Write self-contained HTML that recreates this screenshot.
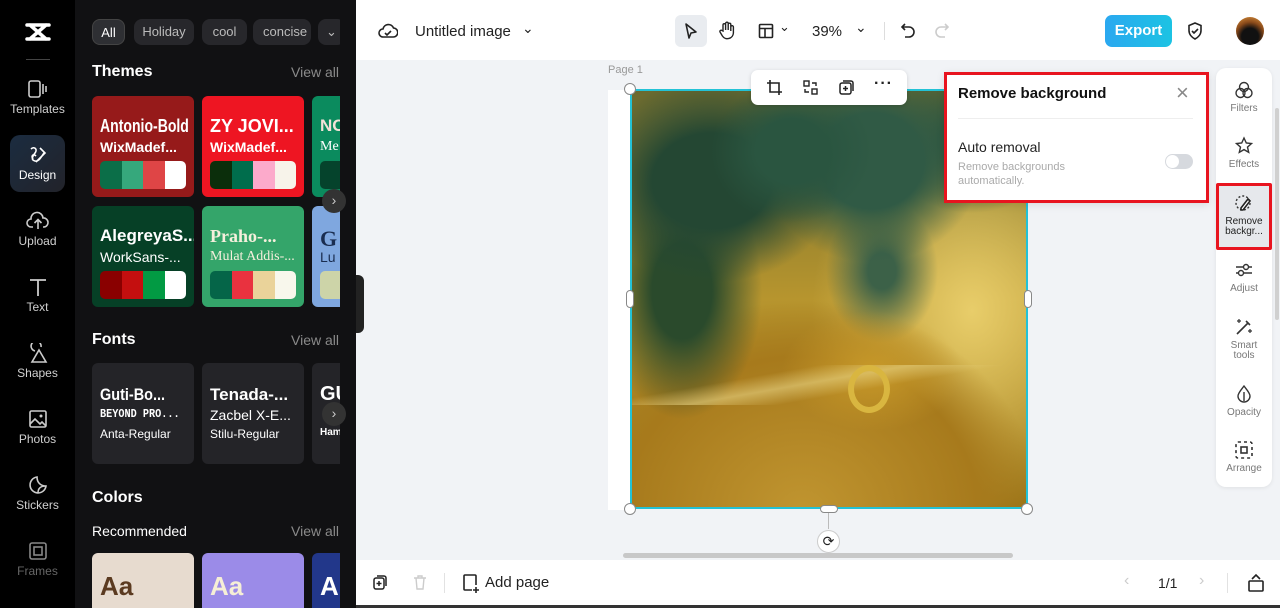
<!DOCTYPE html>
<html><head><meta charset="utf-8">
<style>
*{box-sizing:border-box;margin:0;padding:0}
body{width:1280px;height:608px;overflow:hidden;font-family:"Liberation Sans",sans-serif;background:#f1f3f6;position:relative}
.abs{position:absolute}
.rail{left:0;top:0;width:75px;height:608px;background:#000;overflow:hidden}
.panel{left:75px;top:0;width:281px;height:608px;background:#111113;overflow:hidden}
.clip{position:absolute;left:0;top:0;width:265px;height:608px;overflow:hidden}
.ri{position:absolute;left:0;width:75px;text-align:center;color:#d0d0d0;font-size:12px}
.ri svg{display:block;margin:0 auto 3px}
.chip{position:absolute;top:19px;height:26px;border-radius:8px;background:#27272b;color:#bbb;font-size:13px;line-height:26px;text-align:center}
.h{position:absolute;color:#fff;font-weight:bold;font-size:16px}
.va{position:absolute;left:216px;color:#8a8a8a;font-size:14px}
.card{position:absolute;width:102px;height:101px;border-radius:6px;overflow:hidden}
.card .t1{position:absolute;left:8px;top:20px;font-weight:bold;font-size:17px;color:#fff;white-space:nowrap}
.card .t2{position:absolute;left:8px;top:43px;font-size:14px;color:#fff;white-space:nowrap;font-weight:bold}
.sw{position:absolute;left:8px;top:65px;width:86px;height:28px;border-radius:5px;overflow:hidden;display:flex}
.sw i{flex:1}
.top{left:356px;top:0;width:924px;height:60px;background:#fff}
.bot{left:356px;top:560px;width:924px;height:45px;background:#fff}
.rt{left:1216px;top:68px;width:56px;height:419px;background:#fff;border-radius:10px;box-shadow:0 1px 4px rgba(0,0,0,.08)}
.rb{position:absolute;left:0;width:56px;text-align:center;font-size:10px;color:#777;line-height:10px}
.rb svg{display:block;margin:0 auto 4px}
.nx{position:absolute;width:24px;height:24px;border-radius:50%;background:#333;color:#ccc;text-align:center;line-height:22px;font-size:14px}
</style></head><body>
<div class="abs rail">
  <svg class="abs" style="left:24px;top:21px" width="28" height="22" viewBox="0 0 28 22"><path d="M3 4h22M3 18h22M6 4l16 14M22 4L6 18" stroke="#fff" stroke-width="3.5" fill="none" stroke-linecap="round"/></svg>
  <div class="abs" style="left:26px;top:59px;width:24px;height:1px;background:#444"></div>
  <div class="ri" style="top:79px"><svg width="22" height="20" viewBox="0 0 22 20"><rect x="2" y="2" width="11" height="16" rx="2" stroke="#ccc" stroke-width="1.6" fill="none"/><path d="M16 5v10M19 7v6" stroke="#ccc" stroke-width="1.6"/></svg>Templates</div>
  <div class="abs" style="left:10px;top:135px;width:55px;height:57px;border-radius:10px;background:linear-gradient(135deg,#1b2c40,#22232a)"></div>
  <div class="ri" style="top:145px;color:#fff"><svg width="22" height="20" viewBox="0 0 22 20"><path d="M4 4c3-3 7 0 4 4s-4 7 0 8 6-4 9-8M6 14c-2-3 0-6 3-3M13 3l5 5-9 9" stroke="#fff" stroke-width="1.6" fill="none"/></svg>Design</div>
  <div class="ri" style="top:211px"><svg width="24" height="20" viewBox="0 0 24 20"><path d="M7 16H5a4 4 0 0 1 0-8 6 6 0 0 1 12-1 4.5 4.5 0 0 1 1 9h-1M12 18v-9M8.5 12L12 8.5 15.5 12" stroke="#ccc" stroke-width="1.6" fill="none"/></svg>Upload</div>
  <div class="ri" style="top:277px"><svg width="22" height="20" viewBox="0 0 22 20"><path d="M3 3h16M11 3v16" stroke="#ccc" stroke-width="1.8"/></svg>Text</div>
  <div class="ri" style="top:343px"><svg width="22" height="20" viewBox="0 0 22 20"><path d="M8 8a5 5 0 1 1 6-4M12 7l7 12H5z" stroke="#ccc" stroke-width="1.6" fill="none"/></svg>Shapes</div>
  <div class="ri" style="top:409px"><svg width="22" height="20" viewBox="0 0 22 20"><rect x="3" y="2" width="16" height="16" rx="1.5" stroke="#ccc" stroke-width="1.6" fill="none"/><path d="M3 15l5-5 5 5 2-2 4 4" stroke="#ccc" stroke-width="1.6" fill="none"/><circle cx="14" cy="7" r="1.5" fill="#ccc"/></svg>Photos</div>
  <div class="ri" style="top:475px"><svg width="22" height="20" viewBox="0 0 22 20"><path d="M19 11A8 8 0 1 1 10 2c0 5 3 9 9 9zM19 11c-4 0-8 1-8 7" stroke="#ccc" stroke-width="1.6" fill="none"/></svg>Stickers</div>
  <div class="ri" style="top:541px;color:#666"><svg width="22" height="20" viewBox="0 0 22 20"><rect x="3" y="2" width="16" height="16" rx="2" stroke="#888" stroke-width="1.6" fill="none"/><rect x="7" y="6" width="8" height="8" stroke="#888" stroke-width="1.6" fill="none"/></svg>Frames</div>
</div>
<div class="abs panel">
 <div class="clip">
  <div class="chip" style="left:17px;width:33px;background:#2e2f33;color:#fff;border:1px solid #444">All</div>
  <div class="chip" style="left:59px;width:60px">Holiday</div>
  <div class="chip" style="left:127px;width:45px">cool</div>
  <div class="chip" style="left:178px;width:58px;text-align:left;padding-left:10px;overflow:hidden">concise</div>
  <div class="chip" style="left:243px;width:27px">⌄</div>
  <div class="h" style="left:17px;top:63px">Themes</div><div class="va" style="top:64px">View all</div>
  <div class="card" style="left:17px;top:96px;background:#961a1a"><div class="t1" style="font-size:18px;transform:scaleX(.78);transform-origin:left">Antonio-Bold</div><div class="t2">WixMadef...</div><div class="sw"><i style="background:#0b6e48"></i><i style="background:#36a87c"></i><i style="background:#df4546"></i><i style="background:#fff"></i></div></div>
  <div class="card" style="left:127px;top:96px;background:#ee1522"><div class="t1" style="font-size:18px">ZY JOVI...</div><div class="t2">WixMadef...</div><div class="sw"><i style="background:#0b2e0b"></i><i style="background:#006d4c"></i><i style="background:#fcaacb"></i><i style="background:#f7f3ea"></i></div></div>
  <div class="card" style="left:237px;top:96px;background:#0b8b5e"><div class="t1" style="color:#f3e2d8">NC</div><div class="t2" style="font-weight:normal;font-family:'Liberation Serif',serif">Me</div><div class="sw"><i style="background:#05432c"></i></div></div>
  <div class="card" style="left:17px;top:206px;background:#064026"><div class="t1">AlegreyaS...</div><div class="t2" style="font-weight:normal">WorkSans-...</div><div class="sw"><i style="background:#8a0000"></i><i style="background:#c40f0f"></i><i style="background:#029a43"></i><i style="background:#fff"></i></div></div>
  <div class="card" style="left:127px;top:206px;background:#34a56a"><div class="t1" style="font-family:'Liberation Serif',serif;color:#f5efdc;font-size:18px">Praho-...</div><div class="t2" style="font-family:'Liberation Serif',serif;font-weight:normal;color:#f5efdc">Mulat Addis-...</div><div class="sw"><i style="background:#056548"></i><i style="background:#e9323f"></i><i style="background:#ead39a"></i><i style="background:#f8f7ec"></i></div></div>
  <div class="card" style="left:237px;top:206px;background:#7fa7df"><div class="t1" style="color:#1a2d50;font-family:'Liberation Serif',serif;font-size:22px">G</div><div class="t2" style="color:#1a2d50;font-weight:normal">Lu</div><div class="sw"><i style="background:#cdd4a8"></i></div></div>
  <div class="h" style="left:17px;top:331px">Fonts</div><div class="va" style="top:332px">View all</div>
  <div class="card" style="left:17px;top:363px;background:#242428"><div class="t1" style="top:22px;font-size:17px;transform:scaleX(.85);transform-origin:left">Guti-Bo...</div><div class="t2" style="top:44px;font-family:'Liberation Mono',monospace;font-size:12px;transform:scaleX(.85);transform-origin:left">BEYOND PRO...</div><div class="t2" style="top:64px;font-size:12px;font-weight:normal">Anta-Regular</div></div>
  <div class="card" style="left:127px;top:363px;background:#242428"><div class="t1" style="top:22px">Tenada-...</div><div class="t2" style="top:44px;font-weight:normal">Zacbel X-E...</div><div class="t2" style="top:64px;font-size:12px;font-weight:normal">Stilu-Regular</div></div>
  <div class="card" style="left:237px;top:363px;background:#242428"><div class="t1" style="top:20px;font-size:20px">GU</div><div class="t2" style="top:64px;font-size:10px">Ham</div></div>
  <div class="h" style="left:17px;top:489px">Colors</div>
  <div class="abs" style="left:17px;top:523px;color:#fff;font-size:14px">Recommended</div><div class="va" style="top:523px">View all</div>
  <div class="card" style="left:17px;top:553px;background:#e7dbcf"><div class="t1" style="top:18px;font-size:26px;color:#5b3a20">Aa</div></div>
  <div class="card" style="left:127px;top:553px;background:#9b8be8"><div class="t1" style="top:18px;font-size:26px;color:#f6efd6">Aa</div></div>
  <div class="card" style="left:237px;top:553px;background:#22378a"><div class="t1" style="top:18px;font-size:26px">A</div></div>
 </div>
 <div class="nx" style="left:247px;top:189px">›</div>
 <div class="nx" style="left:247px;top:402px">›</div>
</div>
<div class="abs" style="left:356px;top:275px;width:8px;height:58px;background:#222;border-radius:0 6px 6px 0"></div>

<div class="abs top">
  <svg class="abs" style="left:22px;top:22px" width="20" height="18" viewBox="0 0 20 18"><path d="M6 15H5a4 4 0 0 1 0-8 5.5 5.5 0 0 1 10.5-1A4.5 4.5 0 0 1 15 15H6zM7 11l2 2 4-4" stroke="#222" stroke-width="1.6" fill="none"/></svg>
  <div class="abs" style="left:59px;top:23px;font-size:15px;color:#222">Untitled image</div>
  <div class="abs" style="left:166px;top:20px;font-size:14px;color:#222">⌄</div>
  <div class="abs" style="left:319px;top:15px;width:32px;height:32px;border-radius:6px;background:#e9ecf0"></div>
  <svg class="abs" style="left:327px;top:22px" width="16" height="18" viewBox="0 0 16 18"><path d="M3 2l10 8-5 1-2 5z" stroke="#222" stroke-width="1.6" fill="none" stroke-linejoin="round"/></svg>
  <svg class="abs" style="left:362px;top:21px" width="18" height="20" viewBox="0 0 18 20"><path d="M5 10V4a1.3 1.3 0 0 1 2.6 0v5V2.5a1.3 1.3 0 0 1 2.6 0V9V3.5a1.3 1.3 0 0 1 2.6 0V10V6a1.3 1.3 0 0 1 2.6 0v6a6 6 0 0 1-11 3L2 11a1.3 1.3 0 0 1 2-1.5z" stroke="#222" stroke-width="1.4" fill="none"/></svg>
  <svg class="abs" style="left:402px;top:23px" width="16" height="16" viewBox="0 0 16 16"><rect x="1.5" y="1.5" width="13" height="13" rx="1" stroke="#222" stroke-width="1.6" fill="none"/><path d="M1.5 5.5h13M7 5.5v9" stroke="#222" stroke-width="1.6"/></svg>
  <div class="abs" style="left:423px;top:19px;font-size:13px;color:#222">⌄</div>
  <div class="abs" style="left:456px;top:23px;font-size:15px;color:#222">39%</div>
  <div class="abs" style="left:499px;top:19px;font-size:14px;color:#222">⌄</div>
  <div class="abs" style="left:528px;top:22px;width:1px;height:18px;background:#ddd"></div>
  <svg class="abs" style="left:544px;top:22px" width="16" height="18" viewBox="0 0 16 18"><path d="M5 2L2 5l3 3M2 5h7a5 5 0 0 1 0 10H5" stroke="#222" stroke-width="1.6" fill="none"/></svg>
  <svg class="abs" style="left:578px;top:22px" width="16" height="18" viewBox="0 0 16 18"><path d="M11 2l3 3-3 3M14 5H7a5 5 0 0 0 0 10h4" stroke="#ccc" stroke-width="1.6" fill="none"/></svg>
  <div class="abs" style="left:749px;top:15px;width:67px;height:32px;border-radius:7px;background:linear-gradient(90deg,#2ba8f0,#1cc3e3);color:#fff;font-weight:bold;font-size:15px;line-height:32px;text-align:center">Export</div>
  <svg class="abs" style="left:830px;top:21px" width="18" height="20" viewBox="0 0 18 20"><path d="M9 2l6 2.5v5c0 4-3 7-6 8.5-3-1.5-6-4.5-6-8.5v-5z M6 10l2 2 4-4" stroke="#222" stroke-width="1.6" fill="none"/></svg>
  <div class="abs" style="left:880px;top:17px;width:28px;height:28px;border-radius:50%;background:radial-gradient(circle at 50% 70%,#111 35%,#8a4a1a 60%,#d08a3a 90%)"></div>
</div>

<div class="abs" style="left:608px;top:64px;font-size:11px;color:#999">Page 1</div>
<div class="abs" style="left:608px;top:90px;width:22px;height:420px;background:#fff"></div>
<div class="abs" style="left:630px;top:89px;width:398px;height:420px;border:2px solid #23c2d6;overflow:hidden;background:
radial-gradient(ellipse 90px 60px at 240px 280px,#c89a2a,transparent),
radial-gradient(ellipse 90px 80px at 160px 60px,#2a5540 40%,transparent 90%),
radial-gradient(ellipse 150px 120px at 80px 90px,#244733 40%,transparent 85%),
radial-gradient(ellipse 130px 120px at 240px 70px,#305a45 40%,transparent 85%),
radial-gradient(ellipse 110px 90px at 340px 50px,#33573d 30%,transparent 80%),
radial-gradient(ellipse 100px 160px at 50px 200px,#2a4a2c 30%,transparent 80%),
radial-gradient(ellipse 70px 90px at 250px 180px,#3c6148 20%,transparent 80%),
radial-gradient(ellipse 320px 280px at 170px 420px,#c09530 0%,#a77a1c 55%,transparent 75%),
radial-gradient(ellipse 160px 200px at 340px 220px,#e8cd6a,transparent),
linear-gradient(180deg,#6a6a30,#b7952e 50%,#9a7418)"></div>
<div class="abs" style="left:632px;top:365px;width:396px;height:40px;background:linear-gradient(170deg,transparent 30%,rgba(230,210,130,.6) 45%,transparent 60%)"></div>
<div class="abs" style="left:848px;top:365px;width:42px;height:48px;border:6px solid #d9b640;border-radius:50%"></div>
<div class="abs" style="left:624px;top:83px;width:12px;height:12px;border-radius:50%;background:#fff;border:1px solid #888"></div>
<div class="abs" style="left:624px;top:503px;width:12px;height:12px;border-radius:50%;background:#fff;border:1px solid #888"></div>
<div class="abs" style="left:1021px;top:503px;width:12px;height:12px;border-radius:50%;background:#fff;border:1px solid #888"></div>
<div class="abs" style="left:626px;top:290px;width:8px;height:18px;border-radius:4px;background:#fff;border:1px solid #888"></div>
<div class="abs" style="left:1024px;top:290px;width:8px;height:18px;border-radius:4px;background:#fff;border:1px solid #888"></div>
<div class="abs" style="left:820px;top:505px;width:18px;height:8px;border-radius:4px;background:#fff;border:1px solid #888"></div>
<div class="abs" style="left:828px;top:513px;width:1px;height:16px;background:#bbb"></div>
<div class="abs" style="left:817px;top:530px;width:23px;height:23px;border-radius:50%;background:#fff;border:1px solid #ccc;text-align:center;line-height:21px;font-size:14px;color:#222">⟳</div>
<div class="abs" style="left:623px;top:553px;width:390px;height:5px;border-radius:3px;background:#c8c8c8"></div>

<div class="abs" style="left:751px;top:70px;width:156px;height:35px;background:#fff;border-radius:7px;box-shadow:0 1px 4px rgba(0,0,0,.15)">
  <svg class="abs" style="left:15px;top:9px" width="17" height="17" viewBox="0 0 17 17"><path d="M4 1v12h12M1 4h12v12" stroke="#222" stroke-width="1.6" fill="none"/></svg>
  <svg class="abs" style="left:51px;top:9px" width="17" height="17" viewBox="0 0 17 17"><rect x="2" y="2" width="5" height="5" stroke="#222" stroke-width="1.4" fill="none"/><rect x="10" y="10" width="5" height="5" stroke="#222" stroke-width="1.4" fill="none"/><path d="M10 4h4v3M7 13H3v-3" stroke="#222" stroke-width="1.4" fill="none"/></svg>
  <svg class="abs" style="left:87px;top:9px" width="17" height="17" viewBox="0 0 17 17"><rect x="2" y="4" width="11" height="11" rx="2" stroke="#222" stroke-width="1.5" fill="none"/><path d="M5 2h8a2 2 0 0 1 2 2v8M7.5 7v5M5 9.5h5" stroke="#222" stroke-width="1.5" fill="none"/></svg>
  <div class="abs" style="left:123px;top:5px;font-size:16px;font-weight:bold;color:#222;letter-spacing:1px">···</div>
</div>

<div class="abs" style="left:944px;top:72px;width:265px;height:131px;background:#fff;border:3px solid #e8141f;box-shadow:0 2px 8px rgba(0,0,0,.1)">
  <div class="abs" style="left:11px;top:10px;font-size:15px;font-weight:bold;color:#111">Remove background</div>
  <div class="abs" style="left:229px;top:5px;font-size:22px;color:#888;font-weight:300">×</div>
  <div class="abs" style="left:11px;top:43px;width:235px;height:1px;background:#eee"></div>
  <div class="abs" style="left:11px;top:64px;font-size:14px;color:#222">Auto removal</div>
  <div class="abs" style="left:11px;top:85px;font-size:11px;color:#aaa;line-height:14px">Remove backgrounds<br>automatically.</div>
  <div class="abs" style="left:218px;top:79px;width:28px;height:15px;border-radius:8px;background:#d6d9de"><div class="abs" style="left:1px;top:1px;width:13px;height:13px;border-radius:50%;background:#fff"></div></div>
</div>

<div class="abs rt">
  <div class="rb" style="top:12px"><svg width="20" height="20" viewBox="0 0 20 20"><circle cx="10" cy="7" r="4.5" stroke="#333" stroke-width="1.4" fill="none"/><circle cx="6.5" cy="13" r="4.5" stroke="#333" stroke-width="1.4" fill="none"/><circle cx="13.5" cy="13" r="4.5" stroke="#333" stroke-width="1.4" fill="none"/></svg>Filters</div>
  <div class="rb" style="top:68px"><svg width="20" height="20" viewBox="0 0 20 20"><path d="M10 2l2.3 5 5.2.5-4 3.6 1.2 5.2L10 13.6 5.3 16.3l1.2-5.2-4-3.6 5.2-.5z" stroke="#333" stroke-width="1.4" fill="none"/></svg>Effects</div>
  <div class="abs" style="left:0;top:115px;width:56px;height:67px;border:3px solid #e8141f;background:#e6e8ec;border-radius:2px"></div>
  <div class="rb" style="top:125px;color:#222"><svg width="20" height="20" viewBox="0 0 20 20"><circle cx="9" cy="10" r="7" stroke="#333" stroke-width="1.4" stroke-dasharray="2 2" fill="none"/><path d="M7 15l7-9 2 2-7 9H7z" stroke="#222" stroke-width="1.6" fill="#fff"/></svg>Remove<br>backgr...</div>
  <div class="rb" style="top:192px"><svg width="20" height="20" viewBox="0 0 20 20"><path d="M2 7h16M2 13h16" stroke="#333" stroke-width="1.4"/><circle cx="12" cy="7" r="2.5" fill="#fff" stroke="#333" stroke-width="1.4"/><circle cx="7" cy="13" r="2.5" fill="#fff" stroke="#333" stroke-width="1.4"/></svg>Adjust</div>
  <div class="rb" style="top:249px"><svg width="20" height="20" viewBox="0 0 20 20"><path d="M3 17L14 6M12 4l4 4" stroke="#333" stroke-width="1.6"/><path d="M5 2v4M3 4h4M16 12v4M14 14h4" stroke="#333" stroke-width="1.2"/></svg>Smart<br>tools</div>
  <div class="rb" style="top:316px"><svg width="20" height="20" viewBox="0 0 20 20"><path d="M10 2c3 4 6 7 6 10a6 6 0 0 1-12 0c0-3 3-6 6-10z" stroke="#333" stroke-width="1.4" fill="none"/><path d="M10 8v9" stroke="#333" stroke-width="1.4"/></svg>Opacity</div>
  <div class="rb" style="top:372px"><svg width="20" height="20" viewBox="0 0 20 20"><rect x="2" y="2" width="16" height="16" rx="2" stroke="#333" stroke-width="1.6" stroke-dasharray="3 3" fill="none"/><rect x="7" y="7" width="6" height="6" stroke="#333" stroke-width="1.6" fill="none"/></svg>Arrange</div>
</div>
<div class="abs" style="left:1275px;top:108px;width:4px;height:212px;background:#d0d0d0;border-radius:2px"></div>

<div class="abs bot">
  <svg class="abs" style="left:16px;top:14px" width="16" height="17" viewBox="0 0 16 17"><rect x="2" y="4" width="10" height="11" rx="2" stroke="#222" stroke-width="1.5" fill="none"/><path d="M5 2h7a2 2 0 0 1 2 2v8M7 7v5M4.5 9.5h5" stroke="#222" stroke-width="1.5" fill="none"/></svg>
  <svg class="abs" style="left:56px;top:14px" width="16" height="17" viewBox="0 0 16 17"><path d="M2 4h12M6 4V2h4v2M4 4l1 11h6l1-11" stroke="#ccc" stroke-width="1.4" fill="none"/></svg>
  <div class="abs" style="left:88px;top:13px;width:1px;height:20px;background:#e2e2e2"></div>
  <svg class="abs" style="left:106px;top:13px" width="18" height="20" viewBox="0 0 18 20"><path d="M10 17H3a1 1 0 0 1-1-1V3a1 1 0 0 1 1-1h10a1 1 0 0 1 1 1v9M14 14v6M11 17h6" stroke="#222" stroke-width="1.6" fill="none"/></svg>
  <div class="abs" style="left:129px;top:14px;font-size:15px;color:#222">Add page</div>
  <div class="abs" style="left:768px;top:12px;font-size:16px;color:#ccc">‹</div>
  <div class="abs" style="left:802px;top:15px;font-size:14px;color:#222">1/1</div>
  <div class="abs" style="left:843px;top:12px;font-size:16px;color:#ccc">›</div>
  <div class="abs" style="left:871px;top:13px;width:1px;height:20px;background:#e2e2e2"></div>
  <svg class="abs" style="left:891px;top:13px" width="18" height="20" viewBox="0 0 18 20"><rect x="2" y="8" width="14" height="10" rx="1" stroke="#222" stroke-width="1.6" fill="none"/><path d="M5 6l4-4 4 4" stroke="#222" stroke-width="1.6" fill="none"/></svg>
</div>
<div class="abs" style="left:356px;top:605px;width:924px;height:3px;background:#333"></div>
</body></html>
